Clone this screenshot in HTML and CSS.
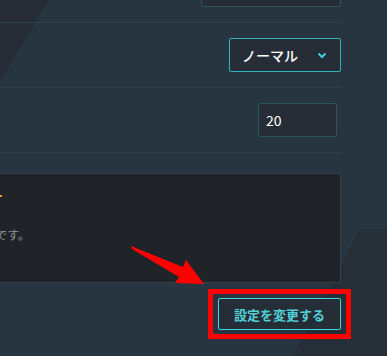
FILE: index.html
```html
<!doctype html>
<html>
    <head>
        <meta charset="utf-8">
        <title>設定</title>
        <meta name="viewport" content="width=device-width, initial-scale=1">
        <link rel="stylesheet" href="styles.css">
    </head>
    <body>
        <section class="settings">
            <div class="row">
                <input class="field field-wide" type="text" value="">
            </div>
            <div class="row">
                <div class="select">
                    <span>ノーマル</span>
                    <svg class="chevron" width="10" height="7" viewBox="0 0 10 7">
                        <polyline points="1.5,1.5 5,5 8.5,1.5" fill="none" stroke="#3ad3df" stroke-width="2"/>
                    </svg>
                </div>
            </div>
            <div class="row">
                <input class="field field-num" type="text" value="20">
            </div>
            <div class="note">
                <div class="note-inner">
                    <p class="note-title">設定変更についての注意事項ー</p>
                    <p class="note-text">変更した内容は次回の更新から反映される予定です。</p>
                </div>
            </div>
            <div class="actions">
                <button class="btn" type="button">設定を変更する</button>
            </div>
        </section>
        <!-- annotation overlay -->
        <div class="mark"></div>
        <svg class="arrow" width="387" height="356" viewBox="0 0 387 356">
            <polygon points="131,246 183,267 186,260 204,284 175,283 179,277 132,249" fill="#ff0000"/>
        </svg>
    </body>
</html>
```

FILE: styles.css
```css
html,
body {
    margin: 0;
    height: 100%;
}

body {
    position: relative;
    overflow: hidden;
    font-family: "Noto Sans CJK JP", "Noto Sans", sans-serif;
    color: #fff;
    background-color: #26353f;
    background-image:
        linear-gradient(to bottom right, #252c36 50%, transparent 50%),
        linear-gradient(to top left, #262e38 50%, transparent 50%),
        linear-gradient(#262e38, #262e38);
    background-size: 49px 82px, 67px 127px, 27px 127px;
    background-position: 0 0, 293px 229px, 360px 229px;
    background-repeat: no-repeat;
}

.settings {
    width: 341px;
    margin-top: -42px;
}

.row {
    display: flex;
    justify-content: flex-end;
    padding: 15px 0;
    border-bottom: 1px solid #2f424a;
}

.field {
    box-sizing: border-box;
    height: 34px;
    padding: 0 7px;
    border: 1px solid #2c5759;
    border-radius: 2px;
    background: #262d37;
    color: #fff;
    font-family: "Noto Sans CJK JP", "Noto Sans", sans-serif;
    font-size: 14px;
    outline: none;
}
.field-wide {
    width: 140px;
}
.field-num {
    width: 79px;
    margin-right: 4px;
}

.select {
    box-sizing: border-box;
    width: 112px;
    height: 34px;
    display: flex;
    align-items: center;
    justify-content: space-between;
    padding: 0 12px 0 12px;
    border: 1px solid #2fb2bb;
    border-radius: 2px;
    background: #262d37;
    font-size: 14px;
    font-weight: 500;
}
.chevron {
    display: block;
    margin-right: 1px;
}

.note {
    box-sizing: border-box;
    height: 110px;
    margin-top: 20px;
    padding: 12px 0 0;
    overflow: hidden;
    background: #202328;
    border: 1px solid #33424a;
    border-left: none;
}
.note-inner {
    width: 500px;
    margin-left: -470px;
    text-align: right;
    white-space: nowrap;
}
.note p {
    margin: 0;
    line-height: 20px;
}
.note-title {
    padding-right: 27px;
    color: #e8a23a;
    font-size: 13px;
    font-weight: bold;
}
.note-text {
    margin-top: 19px !important;
    color: #8d949a;
    font-size: 12px;
}

.actions {
    display: flex;
    justify-content: flex-end;
    margin-top: 15px;
}
.btn {
    box-sizing: border-box;
    width: 123px;
    height: 32px;
    padding: 0;
    border: 1px solid #3cd6df;
    border-radius: 2px;
    background: #252d36;
    color: #52cfd7;
    font-family: "Noto Sans CJK JP", "Noto Sans", sans-serif;
    font-size: 13px;
    font-weight: bold;
}

.mark {
    position: absolute;
    left: 208px;
    top: 289px;
    width: 143px;
    height: 50px;
    box-sizing: border-box;
    border: 5px solid #ff0000;
}
.arrow {
    position: absolute;
    left: 0;
    top: 0;
    pointer-events: none;
}
```
